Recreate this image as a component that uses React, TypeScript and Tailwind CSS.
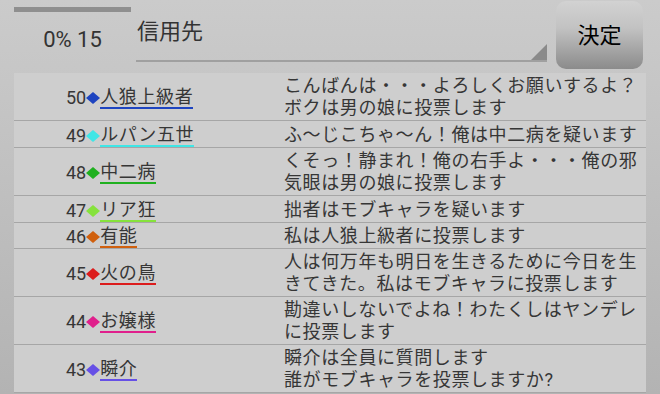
import React from "react";

const rows = [
  { n: 50, name: "人狼上級者", color: "#1e44c0", lines: ["こんばんは・・・よろしくお願いするよ？", "ボクは男の娘に投票します"] },
  { n: 49, name: "ルパン五世", color: "#3fe6e6", lines: ["ふ〜じこちゃ〜ん！俺は中二病を疑います"] },
  { n: 48, name: "中二病", color: "#1fb01f", lines: ["くそっ！静まれ！俺の右手よ・・・俺の邪", "気眼は男の娘に投票します"] },
  { n: 47, name: "リア狂", color: "#86e23c", lines: ["拙者はモブキャラを疑います"] },
  { n: 46, name: "有能", color: "#d0600e", lines: ["私は人狼上級者に投票します"], short: true },
  { n: 45, name: "火の鳥", color: "#dc1c1c", lines: ["人は何万年も明日を生きるために今日を生", "きてきた。私はモブキャラに投票します"] },
  { n: 44, name: "お嬢様", color: "#e0208c", lines: ["勘違いしないでよね！わたくしはヤンデレ", "に投票します"] },
  { n: 43, name: "瞬介", color: "#6650e6", lines: ["瞬介は全員に質問します", "誰がモブキャラを投票しますか?"] },
];

const font = { fontFamily: '"Roboto", "Noto Sans CJK JP", sans-serif' };

export default function App() {
  return (
    <div
      className="w-[660px] h-[394px] overflow-hidden bg-gradient-to-b from-[#cbcbcb] to-[#b3b3b3] text-[#363636]"
      style={font}
    >
      {/* header */}
      <div className="flex h-[72px]">
        <div className="ml-[14px] w-[117px] flex flex-col">
          <div className="mt-[7px] h-[5px] bg-[#8f8f8f]" />
          <div className="flex-1 flex items-center justify-center pb-[4px] text-[22px] leading-none text-[#333]">
            0% 15
          </div>
        </div>
        <div className="ml-[5px] w-[411px] relative h-[62px] border-b-2 border-[#a0a0a0]">
          <div className="pt-[19px] pl-[1px] text-[22px] leading-[26px] text-[#333]">信用先</div>
          <svg className="absolute right-0 bottom-0" width="16" height="16" viewBox="0 0 16 16">
            <polygon points="16,0 16,16 0,16" fill="#8a8a8a" />
          </svg>
        </div>
        <div className="ml-[9px] mt-[1px] w-[87px] h-[68px] rounded-[10px] bg-[linear-gradient(to_bottom,#d2d2d2_0%,#c2c2c2_40%,#8b8b8b_100%)] flex items-center justify-center text-[22px] text-black">
          決定
        </div>
      </div>

      {/* list */}
      <div className="ml-[14px] w-[632px] mt-[1px] bg-[#cecece]">
        {rows.map((r) => (
          <div key={r.n} className="flex border-b border-[#a6a6a6]">
            <div className="w-[270px] pl-[52px] flex items-center pt-[3px]">
              <span className="text-[18px] leading-[20px]">{r.n}</span>
              <svg width="14" height="12" viewBox="0 0 14 12">
                <polygon points="7,0 14,6 7,12 0,6" fill={r.color} />
              </svg>
              <span
                className="text-[18px] leading-[20px] tracking-[0.6px] border-b-2"
                style={{ borderColor: r.color }}
              >
                {r.name}
              </span>
            </div>
            <div
              className={
                r.lines.length > 1
                  ? "flex-1 pt-[2px] pb-[1px] text-[18px] leading-[22px] tracking-[0.6px]"
                  : r.short
                  ? "flex-1 pt-[2px] pb-[1px] text-[18px] leading-[22px] tracking-[0.6px]"
                  : "flex-1 pt-[3px] pb-[1px] text-[18px] leading-[22px] tracking-[0.6px]"
              }
            >
              {r.lines.map((l, i) => (
                <div key={i} className="whitespace-nowrap">{l}</div>
              ))}
            </div>
          </div>
        ))}
      </div>
    </div>
  );
}
